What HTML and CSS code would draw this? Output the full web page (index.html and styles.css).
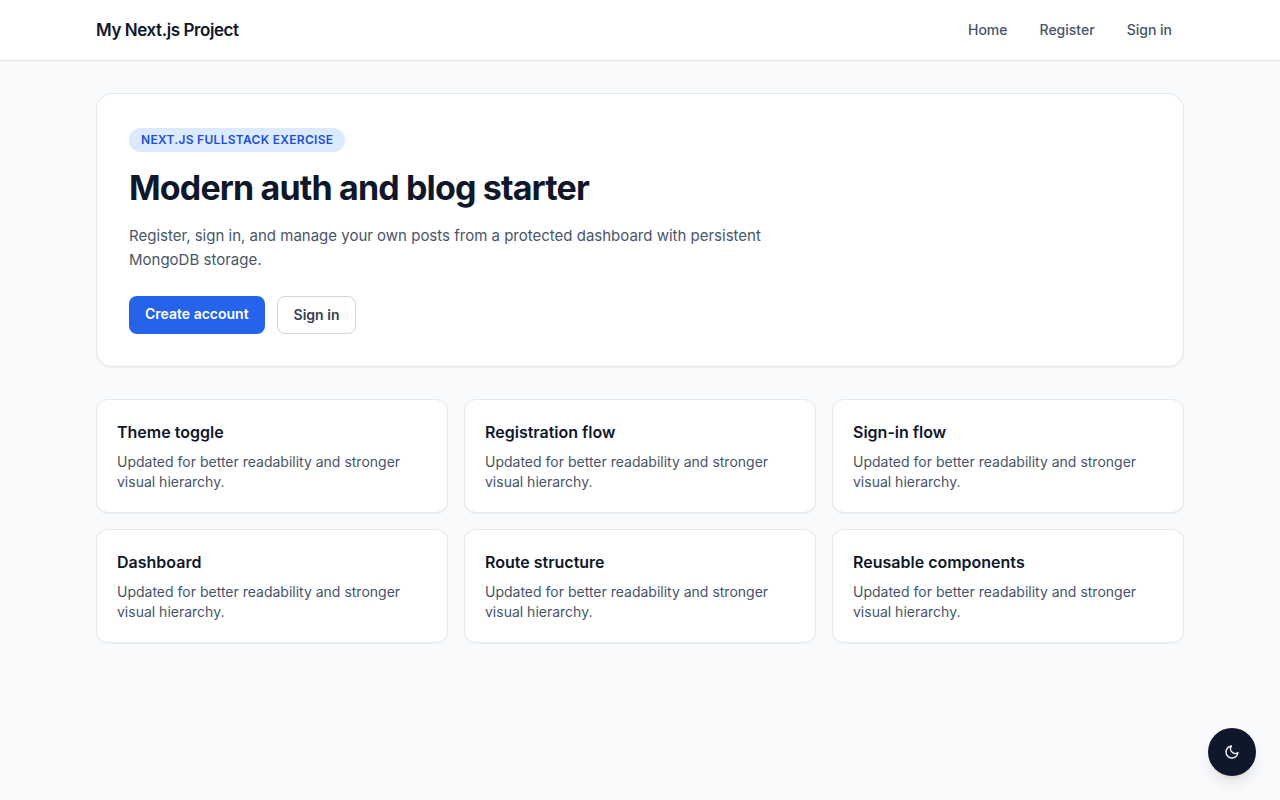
FILE: index.html
```html
<!DOCTYPE html>
<html lang="en">
<head>
    <meta charset="UTF-8">
    <meta name="viewport" content="width=device-width, initial-scale=1.0">
    <title>My Next.js Project</title>
    <link rel="stylesheet" href="styles.css">
</head>
<body>

<header>
    <div class="container header-inner">
        <a class="logo" href="#">My Next.js Project</a>
        <nav>
            <a href="#">Home</a>
            <a href="#">Register</a>
            <a href="#">Sign in</a>
        </nav>
    </div>
</header>

<main class="container">
    <section class="hero">
        <span class="badge">Next.js Fullstack Exercise</span>
        <h1>Modern auth and blog starter</h1>
        <p>Register, sign in, and manage your own posts from a protected dashboard with persistent MongoDB storage.</p>
        <div class="actions">
            <a class="btn btn-primary" href="#">Create account</a>
            <a class="btn btn-outline" href="#">Sign in</a>
        </div>
    </section>

    <section class="cards">
        <article class="card">
            <h2>Theme toggle</h2>
            <p>Updated for better readability and stronger visual hierarchy.</p>
        </article>
        <article class="card">
            <h2>Registration flow</h2>
            <p>Updated for better readability and stronger visual hierarchy.</p>
        </article>
        <article class="card">
            <h2>Sign-in flow</h2>
            <p>Updated for better readability and stronger visual hierarchy.</p>
        </article>
        <article class="card">
            <h2>Dashboard</h2>
            <p>Updated for better readability and stronger visual hierarchy.</p>
        </article>
        <article class="card">
            <h2>Route structure</h2>
            <p>Updated for better readability and stronger visual hierarchy.</p>
        </article>
        <article class="card">
            <h2>Reusable components</h2>
            <p>Updated for better readability and stronger visual hierarchy.</p>
        </article>
    </section>
</main>

<button class="theme-btn" type="button" aria-label="Toggle theme">
    <svg width="16" height="16" viewBox="0 0 24 24" fill="none" stroke="currentColor" stroke-width="2" stroke-linecap="round" stroke-linejoin="round">
        <path d="M21 12.79A9 9 0 1 1 11.21 3 7 7 0 0 0 21 12.79z"/>
    </svg>
</button>

</body>
</html>
```

FILE: styles.css
```css
* {
    margin: 0;
    padding: 0;
    box-sizing: border-box;
}
body {
    font-family: Inter, sans-serif;
    font-size: 16px;
    line-height: 24px;
    background-color: #f8fafc;
    color: #0f172a;
}
a {
    color: inherit;
    text-decoration: none;
}
header {
    background-color: #fff;
    border-bottom: 1px solid #e2e8f0;
}
.container {
    max-width: 1152px;
    margin: 0 auto;
    padding: 0 32px;
}
.header-inner {
    display: flex;
    justify-content: space-between;
    align-items: center;
    padding-top: 12px;
    padding-bottom: 12px;
}
.logo {
    font-size: 17px;
    line-height: 28px;
    font-weight: 600;
    letter-spacing: -0.025em;
}
nav {
    display: flex;
    gap: 8px;
}
nav a {
    padding: 8px 12px;
    font-size: 14px;
    line-height: 20px;
    font-weight: 500;
    color: #475569;
}
nav a:hover {
    color: #0f172a;
}
main.container {
    display: grid;
    gap: 32px;
    padding-top: 32px;
    padding-bottom: 32px;
}
.hero {
    background-color: #fff;
    border: 1px solid #e2e8f0;
    border-radius: 16px;
    padding: 32px;
    box-shadow: 0 1px 2px rgba(0, 0, 0, 0.05);
}
.badge {
    display: inline-block;
    padding: 4px 12px;
    border-radius: 12px;
    background-color: #dbeafe;
    color: #1d4ed8;
    font-size: 12px;
    line-height: 16px;
    font-weight: 600;
    letter-spacing: 0.025em;
    text-transform: uppercase;
}
h1 {
    margin-top: 16px;
    font-size: 34px;
    line-height: 40px;
    font-weight: 700;
    letter-spacing: -0.025em;
}
.hero p {
    max-width: 672px;
    margin-top: 16px;
    font-size: 15px;
    color: #475569;
}
.actions {
    display: flex;
    gap: 12px;
    margin-top: 24px;
}
.btn {
    padding: 8px 16px;
    border-radius: 8px;
    font-size: 14px;
    line-height: 20px;
    font-weight: 600;
}
.btn-primary {
    background-color: #2563eb;
    color: #fff;
}
.btn-outline {
    border: 1px solid #cbd5e1;
    color: #334155;
}
.cards {
    display: grid;
    grid-template-columns: repeat(3, 1fr);
    gap: 16px;
}
.card {
    background-color: #fff;
    border: 1px solid #e2e8f0;
    border-radius: 12px;
    padding: 20px;
    box-shadow: 0 1px 2px rgba(0, 0, 0, 0.05);
}
.card h2 {
    font-size: 16px;
    line-height: 24px;
    font-weight: 600;
}
.card p {
    margin-top: 8px;
    font-size: 14px;
    line-height: 20px;
    color: #475569;
}
.theme-btn {
    position: fixed;
    right: 24px;
    bottom: 24px;
    width: 48px;
    height: 48px;
    display: flex;
    justify-content: center;
    align-items: center;
    border: none;
    border-radius: 50%;
    background-color: #0f172a;
    color: #fff;
    cursor: pointer;
    box-shadow: 0 10px 15px -3px rgba(0, 0, 0, 0.1), 0 4px 6px -4px rgba(0, 0, 0, 0.1);
}
```
